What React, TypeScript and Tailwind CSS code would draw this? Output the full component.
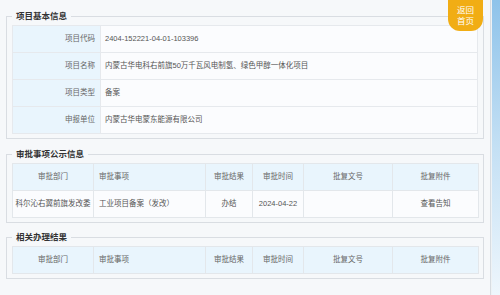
import React from "react";

const font = "font-['Liberation_Sans','Noto_Sans_CJK_SC',sans-serif]";

function Fieldset({ title, children, className = "" }: { title: string; children: React.ReactNode; className?: string }) {
  return (
    <fieldset className={`border border-[#d9dde2] ml-[6px] w-[478px] pl-[5px] pr-[4px] pb-[4px] pt-[3px] ${className}`}>
      <legend className="ml-0 px-[4px] text-[8.5px] leading-[12px] font-bold text-[#333]">{title}</legend>
      {children}
    </fieldset>
  );
}

const info: [string, string][] = [
  ["项目代码", "2404-152221-04-01-103396"],
  ["项目名称", "内蒙古华电科右前旗50万千瓦风电制氢、绿色甲醇一体化项目"],
  ["项目类型", "备案"],
  ["申报单位", "内蒙古华电蒙东能源有限公司"],
];

const headers = ["审批部门", "审批事项", "审批结果", "审批时间", "批复文号", "批复附件"];
const widths = ["w-[81px]", "w-[112px]", "w-[47px]", "w-[51px]", "w-[89px]", "w-[86px]"];

function HeaderRow() {
  return (
    <tr className="h-[27px] bg-[#e9f5fd]">
      {headers.map((h, i) => (
        <th
          key={h}
          className={`${widths[i]} border border-[#e3e7eb] font-normal text-[#666] ${i === 1 ? "text-left pl-[5px]" : "text-center"}`}
        >
          {h}
        </th>
      ))}
    </tr>
  );
}

export default function App() {
  return (
    <div className={`w-[500px] h-[295px] flex bg-[#f6f8fa] overflow-hidden ${font} text-[7.5px]`}>
      <div className="w-[490px] relative pt-[10px] flex flex-col">
        <Fieldset title="项目基本信息">
          <table className="w-[466px] border-collapse table-fixed">
            <tbody>
              {info.map(([k, v]) => (
                <tr key={k} className="h-[27px]">
                  <td className="w-[88px] bg-[#e9f5fd] border border-[#e6e9ed] text-right pr-[5px] text-[#666]">{k}</td>
                  <td className="bg-[#fbfcfe] border border-[#e6e9ed] pl-[4px] text-[#555]">{v}</td>
                </tr>
              ))}
            </tbody>
          </table>
        </Fieldset>

        <Fieldset title="审批事项公示信息" className="mt-[9px]">
          <table className="w-[466px] border-collapse table-fixed">
            <tbody>
              <HeaderRow />
              <tr className="h-[27px] bg-[#fbfcfe] text-[#555]">
                <td className="border border-[#e3e7eb] text-center">科尔沁右翼前旗发改委</td>
                <td className="border border-[#e3e7eb] pl-[5px]">工业项目备案（发改）</td>
                <td className="border border-[#e3e7eb] text-center">办结</td>
                <td className="border border-[#e3e7eb] text-center">2024-04-22</td>
                <td className="border border-[#e3e7eb] text-center"></td>
                <td className="border border-[#e3e7eb] text-center">查看告知</td>
              </tr>
            </tbody>
          </table>
        </Fieldset>

        <Fieldset title="相关办理结果" className="mt-[8px]">
          <table className="w-[466px] border-collapse table-fixed">
            <tbody>
              <HeaderRow />
            </tbody>
          </table>
        </Fieldset>

        <div className="absolute top-0 right-[7px] w-[35px] h-[31px] bg-[#f1ad14] rounded-b-[12px] flex flex-col items-center justify-center text-white text-[8.5px] leading-[11px]">
          <span>返回</span>
          <span>首页</span>
        </div>
      </div>
      <div className="w-px bg-[#d7dce1]" />
      <div className="w-px bg-[#eef2f5]" />
      <div className="flex-1 bg-gradient-to-b from-[#8ec3ea] via-[#c4e0f4] to-[#eef6fc]" />
    </div>
  );
}
